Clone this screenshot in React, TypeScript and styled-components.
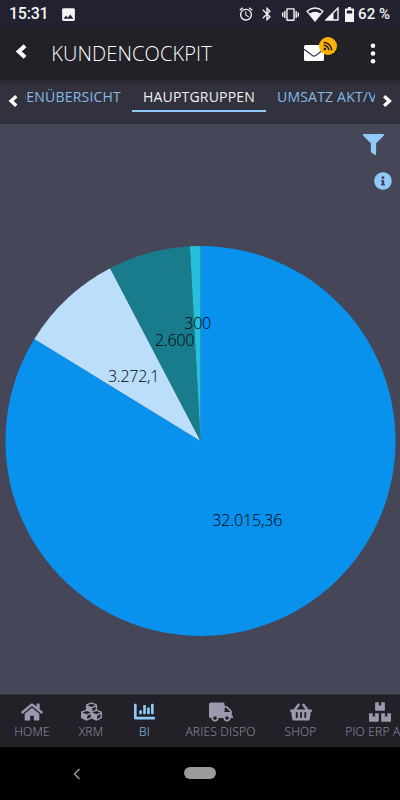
import React from 'react';
import styled, { createGlobalStyle } from 'styled-components';
import {
  FaHome, FaCubes, FaChartBar, FaTruck, FaShoppingBasket, FaBoxes,
  FaFilter, FaInfoCircle, FaRss,
} from 'react-icons/fa';
import { MdAlarm, MdBluetooth, MdVibration, MdImage } from 'react-icons/md';

const GlobalStyle = createGlobalStyle`
  * { box-sizing: border-box; }
  body { margin: 0; background: #000; overflow: hidden; }
  svg { display: block; flex: none; }
`;

const Screen = styled.div`
  width: 400px;
  height: 800px;
  display: flex;
  flex-direction: column;
  overflow: hidden;
  background: #464659;
  font-family: 'Open Sans', 'Noto Sans', sans-serif;
  font-weight: 300;
  white-space: nowrap;
`;

const StatusBar = styled.div`
  height: 27px;
  flex: none;
  display: flex;
  align-items: center;
  padding: 1px 9px 0 9px;
  background: #22212f;
  color: #f4f4f4;
  font: 500 16px/26px Roboto, sans-serif;
`;

const Clock = styled.span`
  width: 51px;
  letter-spacing: -0.25px;
`;

const StatusIcons = styled.div`
  display: flex;
  align-items: center;
  margin-left: auto;
`;

const Slot = styled.span<{ $gap: number }>`
  margin-left: ${(p) => p.$gap}px;
`;

const Battery = styled.span`
  margin-left: 4px;
  width: 33px;
  font-size: 15px;
  letter-spacing: 0.1px;
`;

const Header = styled.header`
  height: 53px;
  flex: none;
  display: flex;
  align-items: center;
  padding: 0 24px 0 15px;
  background: #212127;
  color: #fff;
`;

const BackIcon = styled.span`
  margin-top: -4px;
`;

const Title = styled.h1`
  margin: 1px 0 0 23.5px;
  flex: 1;
  font-size: 20px;
  line-height: 28px;
  font-weight: 300;
  letter-spacing: 0.12px;
`;

const Mail = styled.div`
  position: relative;
  margin: -1px 46px 0 0;
`;

const Feed = styled.span`
  position: absolute;
  left: 15px;
  top: -8px;
  width: 18px;
  height: 18px;
  border-radius: 50%;
  display: grid;
  place-items: center;
  background: #ffb300;
  color: #212127;
`;

const Tabs = styled.nav`
  height: 44px;
  flex: none;
  display: flex;
  align-items: flex-start;
  padding: 0 8px;
  background: linear-gradient(#292931, #32323e 8px, #32323e);
  color: #fff;
`;

const Arrow = styled.span<{ $end?: boolean }>`
  width: 17px;
  padding-top: 14px;
  display: flex;
  justify-content: ${(p) => (p.$end ? 'flex-end' : 'flex-start')};
`;

const TabStrip = styled.div`
  width: 350px;
  height: 44px;
  display: flex;
  overflow: hidden;
`;

const Tab = styled.span<{ $active?: boolean; $width: number; $align?: string }>`
  width: ${(p) => p.$width}px;
  height: 32px;
  flex: none;
  display: flex;
  justify-content: ${(p) => p.$align ?? 'center'};
  font-size: 14px;
  font-weight: 400;
  line-height: 34px;
  letter-spacing: 0.2px;
  color: ${(p) => (p.$active ? '#f0f0f2' : '#86b9e6')};
  border-bottom: 2px solid ${(p) => (p.$active ? '#90caf9' : 'transparent')};
`;

const Content = styled.main`
  height: 570px;
  flex: none;
  display: flex;
  flex-direction: column;
`;

const Tools = styled.div`
  height: 121px;
  display: flex;
  flex-direction: column;
  align-items: flex-end;
  color: #90caf9;
  padding: 10px 8px 0 0;
`;

const FilterButton = styled.span`
  margin: 0 8px 17px 0;
`;

const Chart = styled.svg`
  font-size: 16px;
  font-weight: 300;
`;

const BottomNav = styled.nav`
  height: 53px;
  flex: none;
  display: flex;
  background: #212127;
  border-top: 1px solid #353540;
  overflow: hidden;
`;

const NavItem = styled.span<{ $width: number; $active?: boolean }>`
  width: ${(p) => p.$width}px;
  flex: none;
  display: flex;
  flex-direction: column;
  align-items: center;
  padding-top: 4px;
  color: ${(p) => (p.$active ? '#90caf9' : '#9d98ae')};
`;

const NavIcon = styled.span`
  height: 25px;
  display: flex;
  align-items: center;
`;

const NavLabel = styled.span`
  font-size: 12px;
  line-height: 16px;
  letter-spacing: 0.2px;
`;

const SystemBar = styled.div`
  height: 53px;
  flex: none;
  display: flex;
  align-items: center;
  padding-left: 72px;
  background: #000;
  color: #9b9b9b;
`;

const HomePill = styled.span`
  width: 32px;
  height: 12px;
  margin: -1px 0 0 103px;
  border-radius: 6px;
  background: #9b9b9b;
`;

const CX = 200.5;
const CY = 441 - 245;
const R = 195;

const slices = [
  { value: 32015.36, label: '32.015,36', color: '#0892ee', x: 247.3, y: 525.5, w: 70 },
  { value: 3272.1, label: '3.272,1', color: '#bbdefb', x: 133.7, y: 382, w: 51.5 },
  { value: 2600, label: '2.600', color: '#187c8c', x: 174.7, y: 345.5, w: 39.5 },
  { value: 330, label: '300', color: '#26c0dc', x: 197.7, y: 328.5, w: 27 },
];

const total = slices.reduce((sum, s) => sum + s.value, 0);

function point(share: number) {
  const a = share * Math.PI * 2;
  return `${CX + R * Math.sin(a)} ${CY - R * Math.cos(a)}`;
}

function Pie() {
  let start = 0;
  const paths = slices.map((s) => {
    const end = start + s.value / total;
    const d = `M${CX} ${CY}L${point(start)}A${R} ${R} 0 ${end - start > 0.5 ? 1 : 0} 1 ${point(end)}Z`;
    start = end;
    return <path key={s.label} d={d} fill={s.color} />;
  });
  return (
    <Chart width="400" height="400" viewBox="0 0 400 400">
      {paths}
      {slices.map((s) => (
        <text key={s.label} x={s.x} y={s.y - 245} textAnchor="middle" textLength={s.w} fill="#000">
          {s.label}
        </text>
      ))}
    </Chart>
  );
}

function Chevron({ size, right }: { size: number; right?: boolean }) {
  return (
    <svg width={size * 0.75} height={size} viewBox="0 0 12 16">
      <path
        d={right ? 'M2.5 2.5L8.5 8L2.5 13.5' : 'M9.5 2.5L3.5 8L9.5 13.5'}
        fill="none"
        stroke="currentColor"
        strokeWidth="3.8"
      />
    </svg>
  );
}

const navItems = [
  { label: 'HOME', Icon: FaHome, width: 64, size: 22 },
  { label: 'XRM', Icon: FaCubes, width: 54, size: 21 },
  { label: 'BI', Icon: FaChartBar, width: 53, size: 21, active: true },
  { label: 'ARIES DISPO', Icon: FaTruck, width: 99, size: 24 },
  { label: 'SHOP', Icon: FaShoppingBasket, width: 61, size: 22 },
  { label: 'PIO ERP APP', Icon: FaBoxes, width: 98, size: 22 },
];

export default function App() {
  return (
    <>
      <GlobalStyle />
      <Screen>
        <StatusBar>
          <Clock>15:31</Clock>
          <MdImage size={17} />
          <StatusIcons>
            <MdAlarm size={16} />
            <Slot $gap={5}><MdBluetooth size={16} /></Slot>
            <Slot $gap={7}><MdVibration size={17} /></Slot>
            <Slot $gap={7}>
              <svg width="18" height="15" viewBox="0 0 18 15">
                <path d="M1 4.2Q9-2.2 17 4.2L9 14Z" fill="none" stroke="currentColor" strokeWidth="1.3" />
                <path d="M3.5 6.5Q9 2.8 14.5 6.5L9 13.8Z" fill="currentColor" />
              </svg>
            </Slot>
            <Slot $gap={1}>
              <svg width="14" height="14" viewBox="0 0 14 14">
                <path d="M13 1V13H1Z" fill="none" stroke="currentColor" strokeWidth="1.4" />
                <path d="M8.5 5.5V13H1Z" fill="currentColor" />
              </svg>
            </Slot>
            <Slot $gap={6}>
              <svg width="9" height="15" viewBox="0 0 9 15">
                <path d="M3 0h3v1.5h3V15H0V1.5h3ZM1.8 3.5v3h5.4v-3Z" fill="currentColor" fillRule="evenodd" />
              </svg>
            </Slot>
            <Battery>62 %</Battery>
          </StatusIcons>
        </StatusBar>
        <Header>
          <BackIcon><Chevron size={17} /></BackIcon>
          <Title>KUNDENCOCKPIT</Title>
          <Mail>
            <svg width="20" height="16" viewBox="0 0 20 16">
              <rect width="20" height="16" rx="1.5" fill="currentColor" />
              <path d="M0 4.2L8.5 10.6Q10 11.7 11.5 10.6L20 4.2" fill="none" stroke="#212127" strokeWidth="1.1" />
            </svg>
            <Feed><FaRss size={10} /></Feed>
          </Mail>
          <svg width="6" height="21" viewBox="0 0 6 21">
            <circle cx="3" cy="2.8" r="2.3" fill="currentColor" />
            <circle cx="3" cy="10.5" r="2.3" fill="currentColor" />
            <circle cx="3" cy="18.2" r="2.3" fill="currentColor" />
          </svg>
        </Header>
        <Tabs>
          <Arrow><Chevron size={14} /></Arrow>
          <TabStrip>
            <Tab $width={96} $align="flex-end">KUNDENÜBERSICHT</Tab>
            <Slot $gap={11}><Tab $width={134} $active>HAUPTGRUPPEN</Tab></Slot>
            <Slot $gap={11}><Tab $width={120} $align="flex-start">UMSATZ AKT/VJ</Tab></Slot>
          </TabStrip>
          <Arrow $end><Chevron size={14} right /></Arrow>
        </Tabs>
        <Content>
          <Tools>
            <FilterButton><FaFilter size={21} /></FilterButton>
            <FaInfoCircle size={18} />
          </Tools>
          <Pie />
        </Content>
        <BottomNav>
          {navItems.map(({ label, Icon, width, size, active }) => (
            <NavItem key={label} $width={width} $active={active}>
              <NavIcon><Icon size={size} /></NavIcon>
              <NavLabel>{label}</NavLabel>
            </NavItem>
          ))}
        </BottomNav>
        <SystemBar>
          <svg width="9" height="12" viewBox="0 0 9 12">
            <path d="M7.5 1L2.5 6L7.5 11" fill="none" stroke="currentColor" strokeWidth="1.5" />
          </svg>
          <HomePill />
        </SystemBar>
      </Screen>
    </>
  );
}
